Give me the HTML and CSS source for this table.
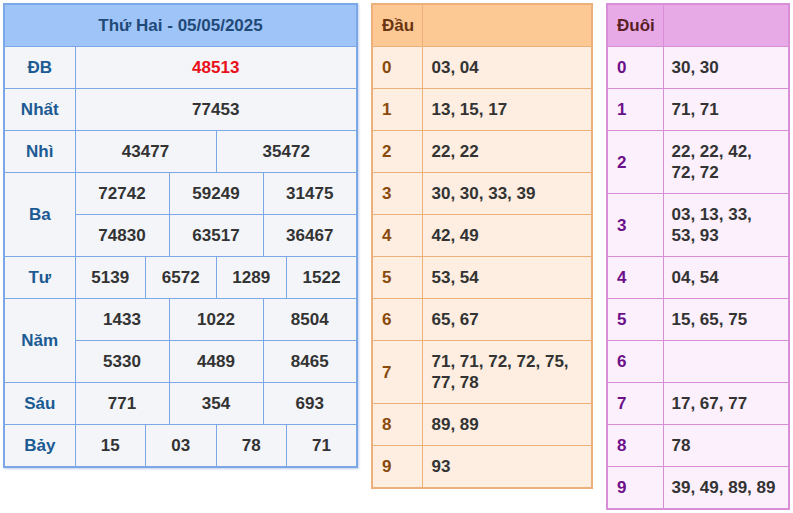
FILE: index.html
```html
<!DOCTYPE html>
<html lang="vi">
<head>
<meta charset="utf-8">
<title>Kết quả xổ số</title>
<link rel="stylesheet" href="styles.css">
</head>
<body>
<div class="wrap">
  <table class="kq">
    <colgroup>
      <col class="c-label">
      <col><col><col><col><col><col><col><col><col><col><col><col>
    </colgroup>
    <thead>
      <tr><th colspan="13" class="kq-title">Thứ Hai - 05/05/2025</th></tr>
    </thead>
    <tbody>
      <tr><td class="lbl">ĐB</td><td colspan="12" class="db">48513</td></tr>
      <tr><td class="lbl">Nhất</td><td colspan="12">77453</td></tr>
      <tr><td class="lbl">Nhì</td><td colspan="6">43477</td><td colspan="6">35472</td></tr>
      <tr><td class="lbl" rowspan="2">Ba</td><td colspan="4">72742</td><td colspan="4">59249</td><td colspan="4">31475</td></tr>
      <tr><td colspan="4">74830</td><td colspan="4">63517</td><td colspan="4">36467</td></tr>
      <tr><td class="lbl">Tư</td><td colspan="3">5139</td><td colspan="3">6572</td><td colspan="3">1289</td><td colspan="3">1522</td></tr>
      <tr><td class="lbl" rowspan="2">Năm</td><td colspan="4">1433</td><td colspan="4">1022</td><td colspan="4">8504</td></tr>
      <tr><td colspan="4">5330</td><td colspan="4">4489</td><td colspan="4">8465</td></tr>
      <tr><td class="lbl">Sáu</td><td colspan="4">771</td><td colspan="4">354</td><td colspan="4">693</td></tr>
      <tr><td class="lbl">Bảy</td><td colspan="3">15</td><td colspan="3">03</td><td colspan="3">78</td><td colspan="3">71</td></tr>
    </tbody>
  </table>

  <table class="lt dau">
    <colgroup><col class="c-key"><col></colgroup>
    <thead><tr><th>Đầu</th><th></th></tr></thead>
    <tbody>
      <tr><td class="key">0</td><td>03, 04</td></tr>
      <tr><td class="key">1</td><td>13, 15, 17</td></tr>
      <tr><td class="key">2</td><td>22, 22</td></tr>
      <tr><td class="key">3</td><td>30, 30, 33, 39</td></tr>
      <tr><td class="key">4</td><td>42, 49</td></tr>
      <tr><td class="key">5</td><td>53, 54</td></tr>
      <tr><td class="key">6</td><td>65, 67</td></tr>
      <tr><td class="key">7</td><td>71, 71, 72, 72, 75, 77, 78</td></tr>
      <tr><td class="key">8</td><td>89, 89</td></tr>
      <tr><td class="key">9</td><td>93</td></tr>
    </tbody>
  </table>

  <table class="lt duoi">
    <colgroup><col class="c-key"><col></colgroup>
    <thead><tr><th>Đuôi</th><th></th></tr></thead>
    <tbody>
      <tr><td class="key">0</td><td>30, 30</td></tr>
      <tr><td class="key">1</td><td>71, 71</td></tr>
      <tr><td class="key">2</td><td>22, 22, 42, 72, 72</td></tr>
      <tr><td class="key">3</td><td>03, 13, 33, 53, 93</td></tr>
      <tr><td class="key">4</td><td>04, 54</td></tr>
      <tr><td class="key">5</td><td>15, 65, 75</td></tr>
      <tr><td class="key">6</td><td></td></tr>
      <tr><td class="key">7</td><td>17, 67, 77</td></tr>
      <tr><td class="key">8</td><td>78</td></tr>
      <tr><td class="key">9</td><td>39, 49, 89, 89</td></tr>
    </tbody>
  </table>
</div>
</body>
</html>
```

FILE: styles.css
```css
html, body {
  margin: 0;
  padding: 0;
  background: #ffffff;
}

body {
  font-family: "Liberation Sans", Arial, sans-serif;
  font-size: 17px;
  font-weight: bold;
  color: #333333;
}

.wrap {
  display: flex;
  align-items: flex-start;
  padding: 3px;
  gap: 13px;
}

table {
  border-collapse: collapse;
  table-layout: fixed;
}

td, th {
  padding: 10px 8px;
  line-height: 21px;
  font-weight: bold;
}

/* main results table */
.kq {
  width: 355px;
  border: 2px solid #7da8e8;
  background: #f3f5f9;
  box-shadow: 1px 1px 2px rgba(80, 120, 200, 0.35);
}

.kq td, .kq th {
  border: 1px solid #7da8e8;
  text-align: center;
}

.kq .c-label {
  width: 71px;
}

.kq-title {
  background: #9fc4f8;
  color: #1f4a78;
  font-size: 17px;
}

.kq .lbl {
  color: #1b5a92;
}

.kq .db {
  color: #e8101a;
}

/* loto tables */
.lt td, .lt th {
  text-align: left;
  padding: 10px 9px;
}

.lt th {
  font-size: 17px;
}

.dau {
  width: 222px;
  border: 2px solid #ecb07a;
  background: #fdeee1;
}

.dau .c-key {
  width: 50px;
}

.dau td, .dau th {
  border: 1px solid #ecb07a;
}

.dau th {
  background: #fcc995;
  color: #6b3410;
}

.dau .key {
  color: #8a4a0c;
}

.duoi {
  width: 184px;
  border: 2px solid #d88fd8;
  background: #fcf0fc;
}

.duoi .c-key {
  width: 56px;
}

.duoi td, .duoi th {
  border: 1px solid #d88fd8;
}

.duoi td:last-child {
  padding-left: 8px;
  padding-right: 9px;
}

.duoi th {
  background: #e7aae7;
  color: #5a1f24;
}

.duoi .key {
  color: #6c108a;
}
```
